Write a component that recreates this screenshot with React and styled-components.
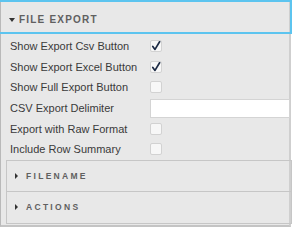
import React from 'react';
import styled, { createGlobalStyle } from 'styled-components';

const Global = createGlobalStyle`
	body {
		margin: 0;
		background: #ffffff;
		font-family: 'Liberation Sans', Arial, sans-serif;
	}
`;

const Panel = styled.div`
	width: 291px;
	box-sizing: border-box;
	background: #e8e8e8;
	border-left: 1px solid #b9b9b9;
	border-right: 2px solid #cfcfcf;
	border-bottom: 2px solid #c4c4c4;
	display: flex;
	flex-direction: column;
`;

const Header = styled.div`
	height: 34px;
	box-sizing: border-box;
	margin-left: -1px;
	width: 292px;
	border-top: 2px solid #5cc4ef;
	border-bottom: 2px solid #5cc4ef;
	border-right: 2px solid #5cc4ef;
	display: flex;
	align-items: center;
	gap: 4px;
	padding: 5px 0 0 9px;
`;

const Title = styled.span`
	font-size: ${p => (p.small ? '8.5px' : '10px')};
	font-weight: bold;
	letter-spacing: ${p => (p.small ? '2.3px' : '1.2px')};
	color: #606060;
	text-transform: uppercase;
	line-height: 1;
`;

const Caret = styled.span`
	width: 0;
	height: 0;
	display: inline-block;
	${p =>
		p.open
			? `border-left: 3.5px solid transparent;
		border-right: 3.5px solid transparent;
		border-top: 4px solid #333;`
			: `border-top: 3px solid transparent;
		border-bottom: 3px solid transparent;
		border-left: 3.5px solid #333;`}
`;

const Form = styled.div`
	display: grid;
	grid-template-columns: 140px 1fr;
	grid-auto-rows: 20.6px;
	padding: 2px 0 0 9px;
	align-items: center;
`;

const Label = styled.div`
	font-size: 11px;
	color: #3a3a3a;
	white-space: nowrap;
`;

const Box = styled.span`
	width: 12px;
	height: 12px;
	box-sizing: border-box;
	border: 1px solid #d2d2d2;
	border-radius: 2px;
	background: #f7f7f7;
	display: flex;
	align-items: center;
	justify-content: center;
`;

const TextInput = styled.input`
	width: 140px;
	height: 19px;
	box-sizing: border-box;
	border: 1px solid #d4d4d4;
	background: #ffffff;
	margin: 0;
	padding: 0 4px;
	font-size: 12px;
	outline: none;
`;

const Sections = styled.div`
	margin: 0 0 1px 5px;
	width: 286px;
	box-sizing: border-box;
	border: 1px solid #c6c6c6;
	border-bottom: none;
`;

const Section = styled.div`
	height: 31.5px;
	box-sizing: border-box;
	border-bottom: 1px solid #c6c6c6;
	display: flex;
	align-items: center;
	gap: 8px;
	padding-left: 8px;
`;

const Check = () => (
	<svg width="10" height="10" viewBox="0 0 10 10">
		<path d="M1.8 5.4 L4 8.4 L8.6 0.8" fill="none" stroke="#1c2a44" strokeWidth="1.7" strokeLinecap="round" strokeLinejoin="round" />
	</svg>
);

const rows = [
	{ label: 'Show Export Csv Button', type: 'check', checked: true },
	{ label: 'Show Export Excel Button', type: 'check', checked: true },
	{ label: 'Show Full Export Button', type: 'check', checked: false },
	{ label: 'CSV Export Delimiter', type: 'text' },
	{ label: 'Export with Raw Format', type: 'check', checked: false },
	{ label: 'Include Row Summary', type: 'check', checked: false },
];

const App = () => {
	return (
		<React.Fragment>
			<Global />
			<Panel>
				<Header>
					<Caret open />
					<Title>File Export</Title>
				</Header>
				<Form>
					{rows.map(r => (
						<React.Fragment key={r.label}>
							<Label>{r.label}</Label>
							{r.type === 'text' ? <TextInput /> : <Box>{r.checked && <Check />}</Box>}
						</React.Fragment>
					))}
				</Form>
				<Sections>
					<Section>
						<Caret />
						<Title small>Filename</Title>
					</Section>
					<Section>
						<Caret />
						<Title small>Actions</Title>
					</Section>
				</Sections>
			</Panel>
		</React.Fragment>
	);
};

export default App;
